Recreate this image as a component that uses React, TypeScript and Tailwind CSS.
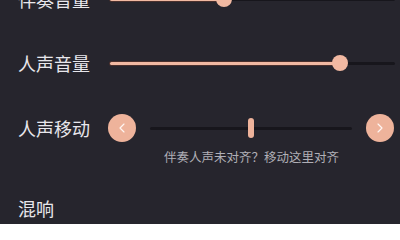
import { ChevronLeft, ChevronRight } from "lucide-react";

const font = { fontFamily: '"Noto Sans CJK SC", "Noto Sans", sans-serif' };

// Volume slider row: peach fill, dark rest, round thumb
const VolumeSlider = ({ value }: { value: number }) => (
  <div className="relative flex-1 h-[16px] flex items-center">
    <div className="w-full h-[3px] rounded-full bg-[#17161c]" />
    <div
      className="absolute left-0 h-[3px] rounded-full bg-[#f1b9a2] shadow-[0_0_0_1px_#4a302d]"
      style={{ width: `${value}%` }}
    />
    <div
      className="absolute w-[16px] h-[16px] -ml-[8px] rounded-full bg-[#f1b9a2]"
      style={{ left: `${value}%` }}
    />
  </div>
);

const Label = ({ text }: { text: string }) => (
  <div className="w-[92px] shrink-0 text-[18px] leading-[24px] text-[#e8e7ec]">{text}</div>
);

const RoundButton = ({ dir }: { dir: "left" | "right" }) => (
  <button className="w-[28px] h-[28px] shrink-0 rounded-full bg-[#eeb39b] flex items-center justify-center">
    {dir === "left" ? (
      <ChevronLeft className="w-[16px] h-[16px] text-[#fff6f2]" strokeWidth={1.75} />
    ) : (
      <ChevronRight className="w-[16px] h-[16px] text-[#fff6f2]" strokeWidth={1.75} />
    )}
  </button>
);

export default function App() {
  return (
    <div className="w-[400px] h-[224px] overflow-hidden bg-[#26252d]" style={font}>
      <div className="-mt-[32px] pl-[18px] flex flex-col">
        {/* 伴奏音量 */}
        <div className="h-[62px] flex items-center pr-[5px]">
          <Label text="伴奏音量" />
          <VolumeSlider value={40} />
        </div>

        {/* 人声音量 */}
        <div className="h-[66px] flex items-center pr-[5px]">
          <Label text="人声音量" />
          <VolumeSlider value={80.7} />
        </div>

        {/* 人声移动 */}
        <div className="pt-[18px]">
          <div className="h-[28px] flex items-center pr-[6px]">
            <div className="w-[90px] shrink-0 text-[18px] leading-[24px] text-[#e8e7ec]">人声移动</div>
            <RoundButton dir="left" />
            <div className="relative flex-1 mx-[14px] h-[20px] flex items-center">
              <div className="w-full h-[3px] rounded-full bg-[#17161c]" />
              <div className="absolute left-1/2 -ml-[3px] w-[6px] h-[20px] rounded-full bg-[#eeb39b]" />
            </div>
            <RoundButton dir="right" />
          </div>
          <div className="mt-[7px] flex">
            <div className="w-[132px] shrink-0" />
            <div className="w-[203px] text-center text-[12.5px] leading-[16px] text-[#b0afb6] whitespace-nowrap">
              伴奏人声未对齐？移动这里对齐
            </div>
          </div>
        </div>

        {/* 混响 */}
        <div className="mt-[31px] text-[18px] leading-[24px] text-[#e8e7ec]">混响</div>
      </div>
    </div>
  );
}
